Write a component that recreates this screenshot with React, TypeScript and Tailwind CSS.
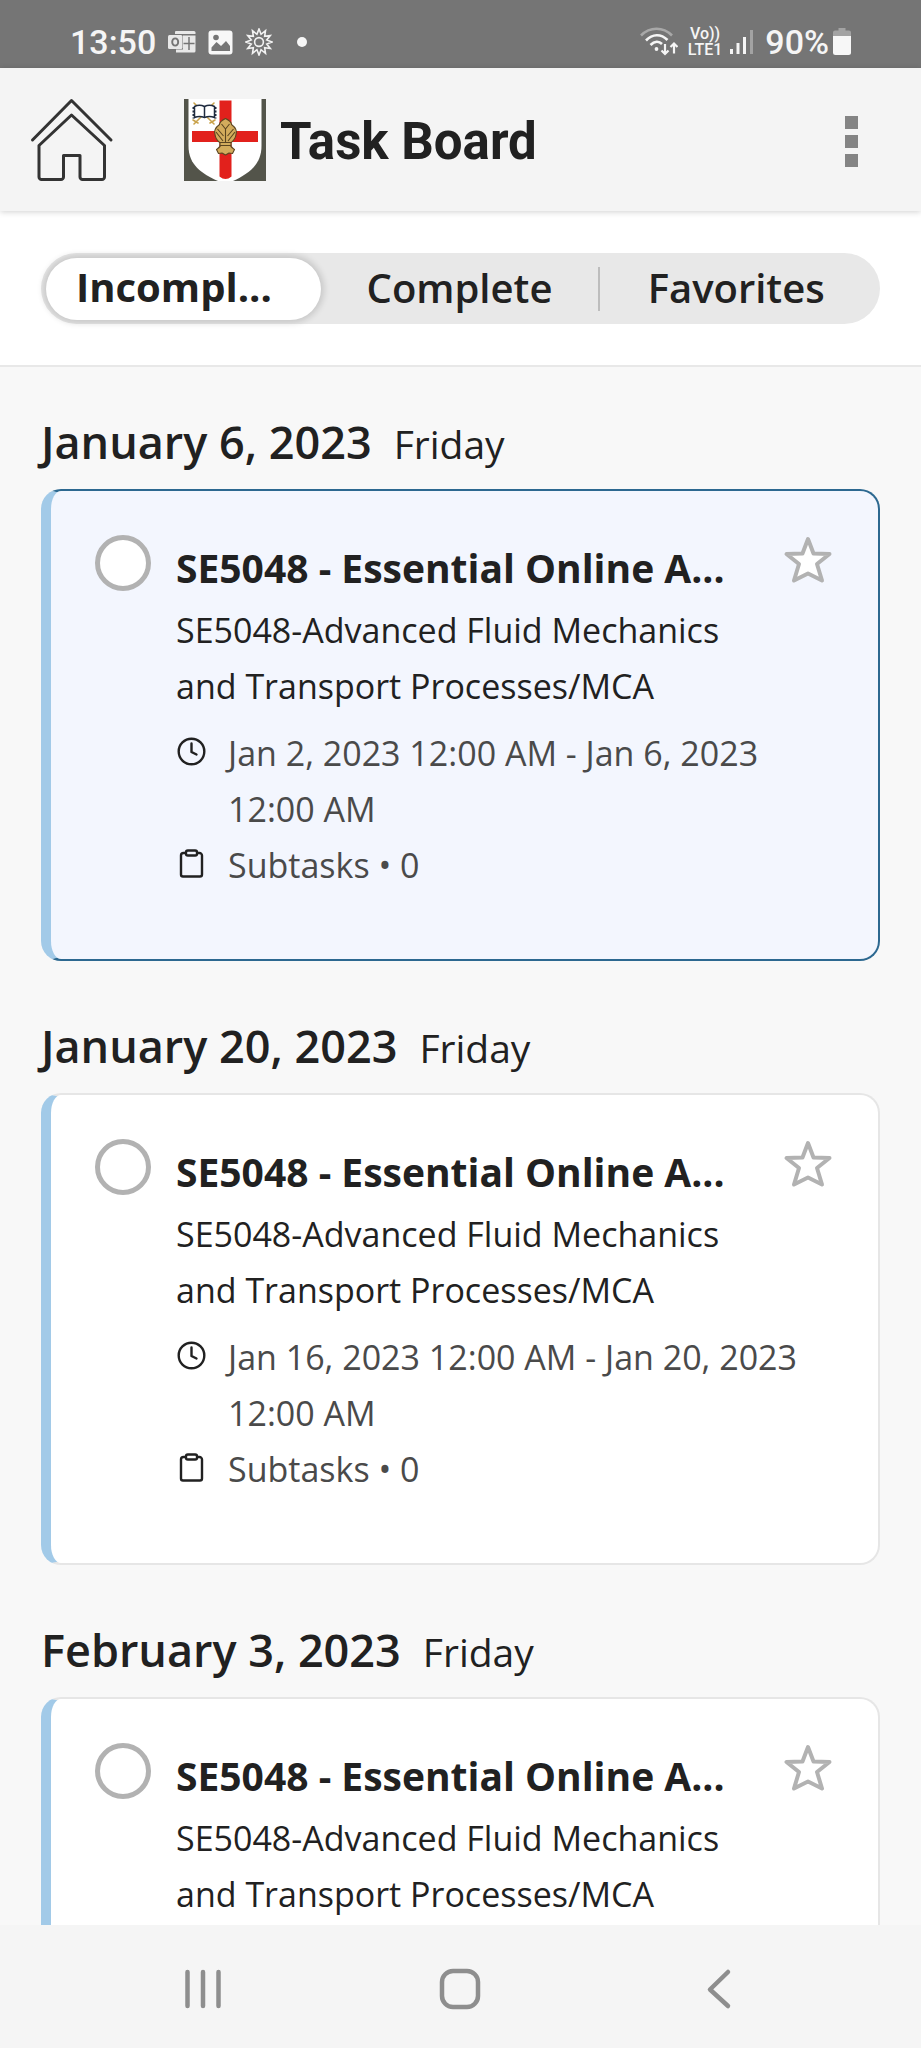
import { useState } from 'react'

interface Task {
  date: string
  weekday: string
  title: string
  course: string
  period?: string
  subtasks?: number
  active?: boolean
}

const tasks: Task[] = [
  {
    date: 'January 6, 2023',
    weekday: 'Friday',
    title: 'SE5048 - Essential Online A...',
    course: 'SE5048-Advanced Fluid Mechanics and Transport Processes/MCA',
    period: 'Jan 2, 2023 12:00 AM - Jan 6, 2023 12:00 AM',
    subtasks: 0,
    active: true,
  },
  {
    date: 'January 20, 2023',
    weekday: 'Friday',
    title: 'SE5048 - Essential Online A...',
    course: 'SE5048-Advanced Fluid Mechanics and Transport Processes/MCA',
    period: 'Jan 16, 2023 12:00 AM - Jan 20, 2023 12:00 AM',
    subtasks: 0,
  },
  {
    date: 'February 3, 2023',
    weekday: 'Friday',
    title: 'SE5048 - Essential Online A...',
    course: 'SE5048-Advanced Fluid Mechanics and Transport Processes/MCA',
  },
]

const tabs = ['Incompl...', 'Complete', 'Favorites']

function SunIcon() {
  const points = Array.from({ length: 24 }, (_, i) => {
    const r = i % 2 === 0 ? 13 : 8
    const a = (i * Math.PI) / 12
    return `${(14 + r * Math.sin(a)).toFixed(2)},${(14 - r * Math.cos(a)).toFixed(2)}`
  }).join(' ')
  return (
    <svg width="28" height="28" viewBox="0 0 28 28" fill="none" stroke="#f2f2f2" strokeWidth="1.6">
      <polygon points={points} />
      <circle cx="14" cy="14" r="4.4" />
    </svg>
  )
}

function StatusBar() {
  return (
    <div className="flex h-[68px] shrink-0 items-center justify-between bg-[#757575] px-[70px] pt-4 font-['Roboto',sans-serif] text-[#f5f5f5]">
      <div className="flex items-center">
        <span className="text-[34px] leading-none font-medium">13:50</span>
        <svg className="ml-3" width="28" height="24" viewBox="0 0 28 24">
          <path d="M8 1h18a1.500 1.500 0 0 1 1.500 1.500V4H7V2a1 1 0 0 1 1-1z" fill="#e8e8e8" />
          <path d="M15 5.500h12.500V21a1.500 1.500 0 0 1-1.500 1.500H8V19.500h7z" fill="#e8e8e8" />
          <path d="M21 7v13M15.500 13.500h11" stroke="#757575" strokeWidth="1.500" />
          <rect x="0" y="5" width="14.500" height="14" rx="1.500" fill="#e8e8e8" />
          <ellipse cx="7.200" cy="12" rx="3" ry="3.600" fill="none" stroke="#757575" strokeWidth="1.900" />
        </svg>
        <svg className="ml-3" width="25" height="25" viewBox="0 0 25 25">
          <rect x="0.500" y="0.500" width="24" height="24" rx="3" fill="#f7f7f7" />
          <circle cx="8" cy="7.500" r="2.800" fill="#757575" />
          <path d="M3.500 21v-3.500l5-5.500 4.500 4 5-5 4 5v5z" fill="#757575" />
        </svg>
        <span className="ml-3"><SunIcon /></span>
        <span className="ml-6 h-[10px] w-[10px] rounded-full bg-[#f7f7f7]" />
      </div>
      <div className="flex items-center">
        <svg width="38" height="30" viewBox="0 0 38 30" fill="none" strokeWidth="2.600">
          <path d="M1 8.500C10 -0.500 23 -0.500 32 8.500" stroke="#a8a8a8" />
          <path d="M6 13.500C12.500 6.500 21 6.500 27.500 13" stroke="#f5f5f5" />
          <path d="M10.500 18C14.500 14 19 14 22 17" stroke="#f5f5f5" />
          <circle cx="16.500" cy="22" r="1.900" fill="#f5f5f5" />
          <path d="M25 17v9.500M21.500 23.500l3.500 3.500 3.500-3.500M34 26.500V17M30.500 20l3.500-3.500 3.500 3.500" stroke="#f5f5f5" strokeWidth="2.200" />
        </svg>
        <span className="ml-[10px] flex flex-col items-center text-[16px] leading-[16px] font-medium">
          <span>Vo))</span>
          <span>LTE1</span>
        </span>
        <svg className="ml-2" width="23" height="26" viewBox="0 0 23 26">
          <path d="M1.500 20v5M8 14v11M14.500 8v17" stroke="#f5f5f5" strokeWidth="3" />
          <path d="M21.500 1v24" stroke="#a3a3a3" strokeWidth="3" />
        </svg>
        <span className="ml-3 text-[34px] leading-none font-medium">90%</span>
        <svg className="ml-1" width="18" height="28" viewBox="0 0 18 28">
          <path d="M5.500 0h7v2.500H16a2 2 0 0 1 2 2V9H0V4.500a2 2 0 0 1 2-2h3.500z" fill="#a3a3a3" />
          <path d="M0 8h18v16.500a2.500 2.500 0 0 1-2.500 2.500h-13A2.500 2.500 0 0 1 0 24.500z" fill="#f7f7f7" />
        </svg>
      </div>
    </div>
  )
}

function HomeIcon() {
  return (
    <svg width="84" height="84" viewBox="0 0 84 84" fill="none" stroke="#333" strokeWidth="3" strokeLinejoin="round" strokeLinecap="round">
      <path d="M2.500 42L41.500 2.500 81 42" />
      <path d="M41.500 17L9 47.500V79a2.500 2.500 0 0 0 2.500 2.500H31a2.500 2.500 0 0 0 2.500-2.500V57.500H50V79a2.500 2.500 0 0 0 2.500 2.500H72a2.500 2.500 0 0 0 2.500-2.500V47.500z" />
    </svg>
  )
}

function Crest() {
  return (
    <svg width="82" height="82" viewBox="0 0 82 82">
      <rect width="82" height="82" fill="#53544a" />
      <path d="M4.500 0h73v47C77.500 66 64 75 49 82H34C18 75 4.500 66 4.500 47z" fill="#fff" />
      <path d="M35.500 1.500h12V32H74v11H47.500v34.500q-6 5-12 0V43H8V32h27.500z" fill="#e2211c" />
      <g stroke="#c9a24a" strokeWidth="1.600" strokeLinecap="round">
        <path d="M10 4l4 4M30 4l-4 4M10 25l8-8M30 25l-8-8M9 21l5 3M31 21l-5 3" />
      </g>
      <path d="M10.500 7.500q5-2.500 10 0 5-2.500 10 0v11q-5-2-10 0-5-2-10 0z" fill="#fff" stroke="#1e2a3e" strokeWidth="1.500" />
      <path d="M20.500 7.500v11" stroke="#1e2a3e" strokeWidth="1.500" />
      <path d="M9.500 8v11.500M31.500 8v11.500" stroke="#1e2a3e" strokeWidth="2" strokeDasharray="2 1.500" />
      <g fill="#d3ac5c" stroke="#5b4520" strokeWidth="1.100" strokeLinejoin="round">
        <path d="M41.500 19.500c4 2 6 4 6 6 4 3 5.500 7 4.500 10-.500 5-3.500 7-6 9h-9c-3-2-5.500-4-6-9-1-3 .500-7 4.500-10 0-2 2-4 6-6z" />
        <path d="M36.500 45h10c-.500 3 2 4 4 5.500l-2 4-3.500-.500-3.500 2-3.500-2-3.500.500-2-4c2-1.500 4.500-2.500 4-5.500z" />
        <path d="M36 43.500h11v3H36z" />
        <path d="M41.500 30v13M32 33l7 9M51 33l-7 9M37.500 25l4 5 4-5M33.500 30l6 7M49.500 30l-6 7" fill="none" />
      </g>
    </svg>
  )
}

function Header() {
  return (
    <header className="z-10 flex h-[143px] shrink-0 items-center bg-[#f4f4f4] pr-[63px] pl-[30px] shadow-[0_1px_6px_rgba(0,0,0,0.18)]">
      <a href="#home" aria-label="Home">
        <HomeIcon />
      </a>
      <span className="ml-[70px]"><Crest /></span>
      <h1 className="mt-1 ml-[14px] font-['Roboto',sans-serif] text-[51px] leading-none font-bold text-[#212121]">Task Board</h1>
      <button type="button" aria-label="More options" className="mt-1 ml-auto flex flex-col gap-[6px]">
        <span className="h-[13px] w-[13px] bg-[#848484]" />
        <span className="h-[13px] w-[13px] bg-[#848484]" />
        <span className="h-[13px] w-[13px] bg-[#848484]" />
      </button>
    </header>
  )
}

function ClockIcon() {
  return (
    <svg className="mt-3 shrink-0" width="30" height="30" viewBox="0 0 30 30" fill="none" stroke="#212121" strokeWidth="2.400" strokeLinecap="round" strokeLinejoin="round">
      <circle cx="15.500" cy="14.500" r="12.800" />
      <path d="M15.500 6.500V15l5 2.500" />
    </svg>
  )
}

function ClipboardIcon() {
  return (
    <svg className="mt-3 shrink-0" width="30" height="30" viewBox="0 0 30 30" fill="none" stroke="#212121" strokeWidth="2.400" strokeLinejoin="round">
      <path d="M10 4H7.500A2.500 2.500 0 0 0 5 6.500v19a2 2 0 0 0 2 2h17a2 2 0 0 0 2-2v-19A2.500 2.500 0 0 0 23.500 4H21" />
      <rect x="10" y="1.500" width="11" height="5" rx="1.800" />
    </svg>
  )
}

function TaskCard({ task }: { task: Task }) {
  const [done, setDone] = useState(false)
  const color = task.active
    ? 'border-y-[#2c6890] border-r-[#2c6890] bg-[#f3f6fe]'
    : 'border-y-[#e6e6e6] border-r-[#e6e6e6] bg-white'

  return (
    <section className="mb-[42px]">
      <h2 className="flex h-[90px] items-baseline gap-[22px] text-[#212121]">
        <span className="text-[45px] leading-[86px] font-semibold">{task.date}</span>
        <span className="text-[39px]">{task.weekday}</span>
      </h2>
      <article className={`flex min-h-[472px] items-start rounded-[20px] border-2 border-l-[10px] border-l-[#a2cae8] pt-[44px] pr-[42px] pb-[40px] pl-[44px] ${color}`}>
        <input
          type="checkbox"
          aria-label="Mark as complete"
          checked={done}
          onChange={() => setDone(!done)}
          className="h-14 w-14 shrink-0 appearance-none rounded-full border-[5px] border-[#b2b2b2] bg-white checked:bg-[#a2cae8]"
        />
        <div className="ml-[25px] min-w-0 flex-1 text-[34px] leading-[56px] text-[#212121]">
          <div className="flex items-start justify-between pb-px">
            <h3 className="text-[39px] leading-[66px] font-bold whitespace-nowrap">{task.title}</h3>
            <button type="button" aria-label="Add to favorites">
              <svg width="56" height="56" viewBox="0 0 56 56" fill="#fff" stroke="#b2b2b2" strokeWidth="4" strokeLinejoin="round">
                <path d="M28 4l5.500 14.500 16 .500-12.500 10 5 16.500L28 38.500l-14 7L19 29 6.500 19l16-.500z" />
              </svg>
            </button>
          </div>
          <p className="mb-[11px] pr-20">{task.course}</p>
          {task.period && (
            <div className="flex gap-[22px] text-[#4a4a4a]">
              <ClockIcon />
              <span>{task.period}</span>
            </div>
          )}
          {task.subtasks !== undefined && (
            <div className="flex gap-[22px] text-[#4a4a4a]">
              <ClipboardIcon />
              <span>Subtasks • {task.subtasks}</span>
            </div>
          )}
        </div>
      </article>
    </section>
  )
}

export default function App() {
  const [selected, setSelected] = useState(0)

  return (
    <div className="flex h-screen flex-col overflow-hidden bg-[#f8f8f8] font-['Open_Sans','Noto_Sans',sans-serif]">
      <StatusBar />
      <Header />

      <nav className="shrink-0 border-b-2 border-[#e8e8e8] bg-white px-[41px] pt-[42px] pb-[41px]">
        <div className="grid h-[71px] grid-cols-3 items-center rounded-full bg-[#e8e8e8]">
          {tabs.map((tab, i) => (
            <button
              key={tab}
              type="button"
              onClick={() => setSelected(i)}
              className={
                i === selected
                  ? 'ml-[5px] h-[62px] rounded-full bg-white pb-1 pl-[30px] text-left text-[40px] leading-[58px] font-bold text-[#212121] shadow-[0_0_6px_3px_rgba(0,0,0,0.14)]'
                  : `h-11 pb-[2px] text-[40px] leading-[42px] font-semibold text-[#212121] ${i === 1 ? 'border-r-2 border-[#bdbdbd]' : 'pr-2'}`
              }
            >
              {tab}
            </button>
          ))}
        </div>
      </nav>

      <main className="min-h-0 flex-1 overflow-hidden px-[41px] pt-[32px]">
        {tasks.map((task) => (
          <TaskCard key={task.date} task={task} />
        ))}
      </main>

      <footer className="flex h-[123px] shrink-0 items-center justify-around bg-[#f5f5f5] px-[74px] pt-1">
        <button type="button" aria-label="Recent apps">
          <svg width="44" height="44" viewBox="0 0 44 44" stroke="#8e8e8e" strokeWidth="4.500" strokeLinecap="round">
            <path d="M6.500 5v34M22 5v34M37.500 5v34" />
          </svg>
        </button>
        <button type="button" aria-label="Home screen">
          <svg width="44" height="44" viewBox="0 0 44 44" fill="none" stroke="#8e8e8e" strokeWidth="4.500">
            <rect x="4" y="4" width="36" height="36" rx="11" />
          </svg>
        </button>
        <button type="button" aria-label="Back">
          <svg width="44" height="44" viewBox="0 0 44 44" fill="none" stroke="#8e8e8e" strokeWidth="4.500" strokeLinecap="round" strokeLinejoin="round">
            <path d="M32 5L14 22.500 32 39" />
          </svg>
        </button>
      </footer>
    </div>
  )
}
